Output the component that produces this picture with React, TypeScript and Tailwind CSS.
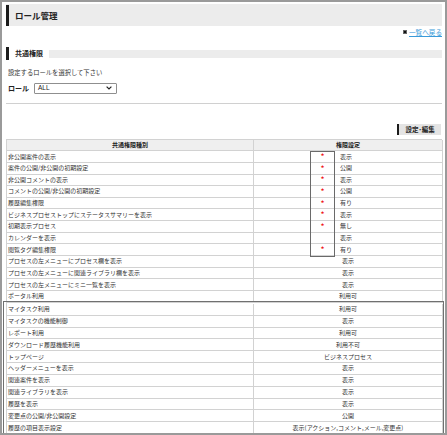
import React from "react";

type Row = { label: string; value: string; mark?: "star" | "none" };

const rows: Row[] = [
  { label: "非公開案件の表示", value: "表示", mark: "star" },
  { label: "案件の公開/非公開の初期設定", value: "公開", mark: "star" },
  { label: "非公開コメントの表示", value: "表示", mark: "star" },
  { label: "コメントの公開/非公開の初期設定", value: "公開", mark: "star" },
  { label: "履歴編集権限", value: "有り", mark: "star" },
  { label: "ビジネスプロセストップにステータスサマリーを表示", value: "表示", mark: "star" },
  { label: "初期表示プロセス", value: "無し", mark: "star" },
  { label: "カレンダーを表示", value: "表示", mark: "none" },
  { label: "閲覧タグ編集権限", value: "有り", mark: "star" },
  { label: "プロセスの左メニューにプロセス欄を表示", value: "表示" },
  { label: "プロセスの左メニューに関連ライブラリ欄を表示", value: "表示" },
  { label: "プロセスの左メニューにミニ一覧を表示", value: "表示" },
  { label: "ポータル利用", value: "利用可" },
  { label: "マイタスク利用", value: "利用可" },
  { label: "マイタスクの機能制御", value: "表示" },
  { label: "レポート利用", value: "利用可" },
  { label: "ダウンロード履歴機能利用", value: "利用不可" },
  { label: "トップページ", value: "ビジネスプロセス" },
  { label: "ヘッダーメニューを表示", value: "表示" },
  { label: "関連案件を表示", value: "表示" },
  { label: "関連ライブラリを表示", value: "表示" },
  { label: "履歴を表示", value: "表示" },
  { label: "変更点の公開/非公開設定", value: "公開" },
  { label: "履歴の項目表示設定", value: "表示(アクション,コメント,メール,変更点)" },
];

function TableRow({ row, idx }: { row: Row; idx: number }) {
  const lower = idx >= 13;
  return (
    <div
      className={
        "grid grid-cols-[247px_189px] " +
        (lower ? "h-[11.83px]" : "h-[11.67px]") +
        (idx === 13 ? " mt-[1.2px]" : "")
      }
    >
      <div className="border-r border-b border-[#d2d2d2] pl-[1px] flex items-center text-[6px] leading-none whitespace-nowrap overflow-hidden">
        {row.label}
      </div>
      <div className="border-r border-b border-[#d2d2d2] flex items-center text-[6px] leading-none whitespace-nowrap">
        {row.mark ? (
          <>
            <div className="w-[56px]" />
            <div className="w-[25px] flex items-center justify-center text-[#ee1111] text-[7px] font-bold">
              {row.mark === "star" ? "*" : ""}
            </div>
            <div className="pl-[5px]">{row.value}</div>
          </>
        ) : (
          <div className="w-full text-center">{row.value}</div>
        )}
      </div>
    </div>
  );
}

export default function App() {
  return (
    <div className="relative w-[447px] h-[435px] overflow-hidden bg-white border-2 border-[#9a9a9a] font-['Noto_Sans_CJK_JP',sans-serif] text-[#333333]">
      <div className="pl-[4px] pr-[3px] pt-[2px]">
        {/* Title bar */}
        <div className="h-[22px] bg-[#ececec] flex items-center">
          <div className="w-[3px] h-[21px] bg-[#1c1c1c] self-end" />
          <div className="pl-[6px] text-[8.5px] font-bold text-[#222222] leading-none">ロール管理</div>
        </div>

        {/* back link */}
        <div className="mt-[2px] h-[8px] flex justify-end items-center gap-[2px]">
          <div className="w-[4px] h-[3.5px] bg-[#111111] border-[0.5px] border-[#666]" />
          <span className="text-[6.6px] leading-none text-[#3a9ad9] underline">一覧へ戻る</span>
        </div>

        {/* Section header */}
        <div className="mt-[11px] h-[13px] flex items-center">
          <div className="w-[3px] h-[13px] bg-[#1c1c1c]" />
          <div className="ml-[6px] text-[7px] font-bold leading-none text-[#222222]">共通権限</div>
          <div className="ml-[6px] flex-1 h-[8px] bg-[#ececec]" />
        </div>

        {/* instruction */}
        <div className="mt-[8.5px] h-[9px] flex items-center pl-[2px] text-[6.3px] leading-none">
          設定するロールを選択して下さい
        </div>

        {/* role select */}
        <div className="mt-[5.5px] h-[10.5px] flex items-center pl-[2px]">
          <span className="text-[7px] font-bold leading-none text-[#222222]">ロール</span>
          <div className="ml-[5px] w-[83px] h-[10.5px] border border-[#8f8f8f] rounded-[1px] flex items-center justify-between pl-[3px] pr-[4px] bg-white">
            <span className="text-[6.5px] leading-none font-['Liberation_Sans',sans-serif] text-[#222]">ALL</span>
            <svg width="6" height="4" viewBox="0 0 6 4">
              <path d="M0.6 0.6 L3 3 L5.4 0.6" fill="none" stroke="#222" strokeWidth="1.2" />
            </svg>
          </div>
        </div>

        {/* hr */}
        <div className="mt-[9.5px] h-[1px] bg-[#d0d0d0]" />

        {/* edit button */}
        <div className="mt-[20px] flex justify-end pr-[1px]">
          <div className="h-[11px] w-[44px] bg-[#e4e4e4] border-l-2 border-[#1c1c1c] flex items-center justify-center text-[6.5px] font-bold leading-none text-[#222222]">
            設定･編集
          </div>
        </div>

        {/* table */}
        <div className="relative mt-[3.5px] w-[436px] border-l border-t border-[#d2d2d2]">
          <div className="grid grid-cols-[247px_189px] h-[11.7px] bg-[#efefef]">
            <div className="border-r border-b border-[#d2d2d2] flex items-center justify-center text-[6px] font-bold leading-none text-[#222]">
              共通権限種別
            </div>
            <div className="border-r border-b border-[#d2d2d2] flex items-center justify-center text-[6px] font-bold leading-none text-[#222]">
              権限設定
            </div>
          </div>
          {rows.map((r, i) => (
            <TableRow key={i} row={r} idx={i} />
          ))}
          <div className="absolute left-[303px] top-[11.2px] w-[25px] h-[106px] border border-[#6a6a6a] pointer-events-none" />
        </div>
      </div>

      {/* stitched lower frame */}
      <div className="absolute left-[1px] top-[299px] w-[441px] h-[134px] border border-[#707070] pointer-events-none" />
    </div>
  );
}
